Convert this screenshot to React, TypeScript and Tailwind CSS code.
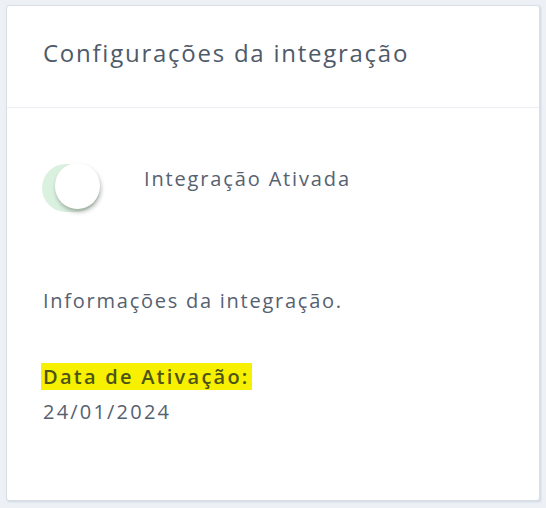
import React from "react";

export default function App() {
  return (
    <div className="w-[546px] h-[508px] bg-[#edf0f5] pt-[5px] pl-[6px]" style={{ fontFamily: "'Open Sans', sans-serif" }}>
      <div className="w-[534px] h-[496px] bg-white border border-[#d9dfe7] rounded-[3px] shadow-[1px_1px_2px_rgba(150,165,185,0.35)] flex flex-col">
        <div className="h-[102px] border-b border-[#eceff3] pl-[36px] pt-[35px]">
          <h1 className="text-[24px] text-[#4f5a69] leading-none tracking-[1.75px]">Configurações da integração</h1>
        </div>
        <div className="pl-[35px] pt-[54px] flex flex-col">
          <div className="flex items-start h-[52px]">
            <div className="relative w-[58px] h-[52px] shrink-0">
              <div className="absolute left-0 top-[2px] w-[58px] h-[48px] rounded-full bg-[#dbf1e0]" />
              <div className="absolute left-[13px] top-[1px] w-[45px] h-[46px] rounded-full bg-white shadow-[1px_3px_4px_rgba(0,0,0,0.28)]" />
            </div>
            <span className="ml-[44px] mt-[7px] text-[20px] text-[#566170] leading-none tracking-[1.85px]">Integração Ativada</span>
          </div>
          <p className="mt-[77px] ml-[1px] text-[20px] text-[#566170] leading-none tracking-[1.75px]">Informações da integração.</p>
          <div className="mt-[52px]">
            <span className="inline-block bg-[#f7f000] px-[2px] -ml-[1px] text-[20px] font-semibold text-[#4c5418] leading-[27px] tracking-[2.25px]">Data de Ativação:</span>
          </div>
          <p className="mt-[12px] ml-[1px] text-[20px] text-[#566170] leading-none tracking-[2.2px]">24/01/2024</p>
        </div>
      </div>
    </div>
  );
}
